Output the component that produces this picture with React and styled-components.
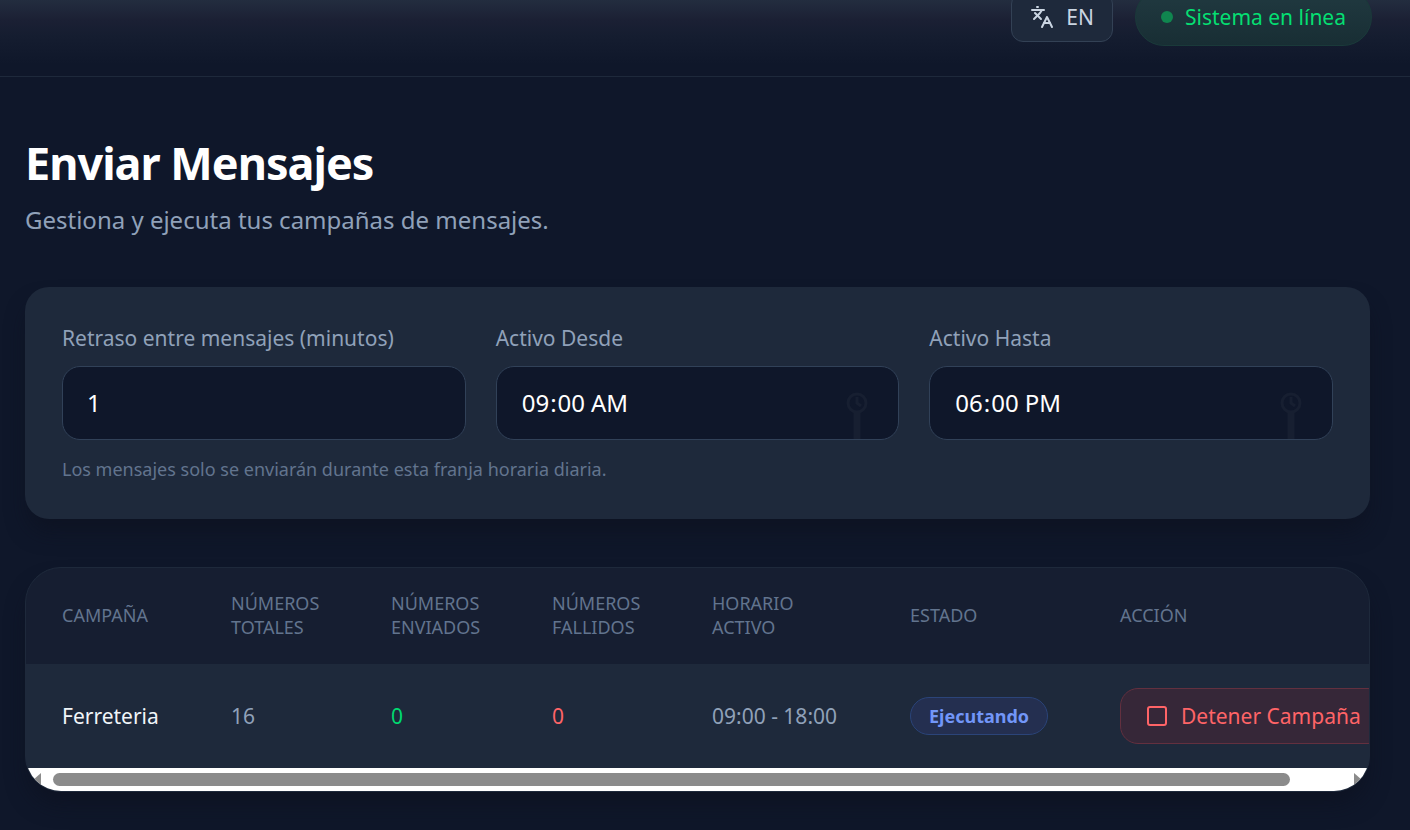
import React from "react";
import styled, { createGlobalStyle } from "styled-components";
import { Languages, Square } from "lucide-react";

const campaigns = [
  {
    name: "Ferreteria",
    total: 16,
    sent: 0,
    failed: 0,
    schedule: "09:00 - 18:00",
    status: "Ejecutando",
  },
];

function TimeField({ id, label, value }) {
  return (
    <Field>
      <Label htmlFor={id}>{label}</Label>
      <InputWrap>
        <Input id={id} type="time" defaultValue={value} />
        <ClockIcon viewBox="0 0 22 47" aria-hidden="true">
          <circle cx="11" cy="11" r="9" />
          <path d="M11 5v6l4 3" />
          <path d="M11 21v26" strokeWidth="7" />
        </ClockIcon>
      </InputWrap>
    </Field>
  );
}

function App() {
  return (
    <Page>
      <GlobalStyle />
      <Header>
        <LangButton type="button">
          <Languages size={24} />
          EN
        </LangButton>
        <OnlinePill>
          <Dot />
          Sistema en línea
        </OnlinePill>
      </Header>
      <Main>
        <Title>Enviar Mensajes</Title>
        <Subtitle>Gestiona y ejecuta tus campañas de mensajes.</Subtitle>

        <Settings>
          <Fields>
            <Field>
              <Label htmlFor="delay">Retraso entre mensajes (minutos)</Label>
              <Input id="delay" type="number" min="1" defaultValue="1" />
            </Field>
            <TimeField id="from" label="Activo Desde" value="09:00" />
            <TimeField id="to" label="Activo Hasta" value="18:00" />
          </Fields>
          <Hint>
            Los mensajes solo se enviarán durante esta franja horaria diaria.
          </Hint>
        </Settings>

        <TableCard>
          <TableScroll>
            <Table>
              <colgroup>
                <col width="169" />
                <col width="160" />
                <col width="161" />
                <col width="160" />
                <col width="198" />
                <col width="210" />
                <col />
              </colgroup>
              <thead>
                <tr>
                  <Th>Campaña</Th>
                  <Th>Números Totales</Th>
                  <Th>Números Enviados</Th>
                  <Th>Números Fallidos</Th>
                  <Th>Horario Activo</Th>
                  <Th>Estado</Th>
                  <Th>Acción</Th>
                </tr>
              </thead>
              <tbody>
                {campaigns.map((c) => (
                  <tr key={c.name}>
                    <Td $color="#f1f5f9">{c.name}</Td>
                    <Td>{c.total}</Td>
                    <Td $color="#00d970">{c.sent}</Td>
                    <Td $color="#ff6467">{c.failed}</Td>
                    <Td>{c.schedule}</Td>
                    <Td>
                      <Status>{c.status}</Status>
                    </Td>
                    <Td>
                      <StopButton type="button">
                        <Square size={24} />
                        Detener Campaña
                      </StopButton>
                    </Td>
                  </tr>
                ))}
              </tbody>
            </Table>
          </TableScroll>
          <ScrollTrack aria-hidden="true">
            <Arrow viewBox="0 0 8 14">
              <path d="M8 0v14L0 7z" />
            </Arrow>
            <ScrollRail>
              <ScrollThumb />
            </ScrollRail>
            <Arrow viewBox="0 0 8 14">
              <path d="M0 0v14l8-7z" />
            </Arrow>
          </ScrollTrack>
        </TableCard>
      </Main>
    </Page>
  );
}

const GlobalStyle = createGlobalStyle`
  * {
    box-sizing: border-box;
  }
  body {
    margin: 0;
    background: #0f172a;
    color: #fff;
    font-family: "Noto Sans", sans-serif;
  }
  button, input {
    font-family: inherit;
  }
`;

const Page = styled.div`
  min-height: 100vh;
  overflow: hidden;
`;

const Header = styled.header`
  display: flex;
  align-items: center;
  justify-content: flex-end;
  gap: 22px;
  height: 120px;
  margin-top: -43px;
  padding: 0 38px;
  border-bottom: 1px solid #1e293b;
  background: linear-gradient(#232d3f 36%, #1b2034 53%, #151d30 66%, #0f172a 90%);
`;

const LangButton = styled.button`
  display: flex;
  align-items: center;
  gap: 12px;
  height: 50px;
  padding: 0 18px;
  border: 1px solid #334155;
  border-radius: 12px;
  background: #1e293b;
  color: #cad5e2;
  font-size: 21px;
`;

const OnlinePill = styled.div`
  display: flex;
  align-items: center;
  gap: 12px;
  height: 58px;
  padding: 0 25px;
  border: 1px solid #1a3a3a;
  border-radius: 29px;
  background: linear-gradient(#213a41, #182e34);
  color: #05df72;
  font-size: 21px;
`;

const Dot = styled.span`
  width: 12px;
  height: 12px;
  border-radius: 50%;
  background: #10864f;
`;

const Main = styled.main`
  padding: 59px 40px 40px 25px;
`;

const Title = styled.h1`
  margin: 0;
  font-size: 45px;
  line-height: 54px;
  font-weight: 700;
  letter-spacing: -1px;
`;

const Subtitle = styled.p`
  margin: 12px 0 0;
  color: #90a1b9;
  font-size: 24px;
  line-height: 36px;
`;

const Settings = styled.section`
  margin-top: 49px;
  padding: 36px 37px;
  border-radius: 24px;
  background: #1e293b;
  box-shadow: 0 15px 22px -4px rgba(13, 17, 32, 0.7);
`;

const Fields = styled.div`
  display: grid;
  grid-template-columns: repeat(3, 1fr);
  gap: 30px;
`;

const Field = styled.div`
  display: flex;
  flex-direction: column;
  gap: 12px;
`;

const Label = styled.label`
  color: #90a1b9;
  font-size: 21px;
  line-height: 31px;
`;

const InputWrap = styled.div`
  position: relative;
`;

const Input = styled.input`
  width: 100%;
  height: 74px;
  padding: 0 24px 2px;
  border: 1px solid #314158;
  border-radius: 18px;
  outline: none;
  background: #0f172a;
  color: #fff;
  font-size: 24px;

  &::-webkit-calendar-picker-indicator {
    opacity: 0;
  }
`;

const ClockIcon = styled.svg`
  position: absolute;
  right: 31px;
  bottom: 1px;
  width: 22px;
  height: 47px;
  fill: none;
  stroke: #171f31;
  stroke-width: 3;
  pointer-events: none;
`;

const Hint = styled.p`
  margin: 16px 0 0;
  color: #62748e;
  font-size: 18px;
  line-height: 27px;
`;

const TableCard = styled.section`
  margin-top: 48px;
  overflow: hidden;
  border: 1px solid #1e293b;
  border-radius: 36px;
  background: #1e293b;
  box-shadow: 0 15px 22px -4px rgba(13, 17, 32, 0.7);
`;

const TableScroll = styled.div`
  overflow: hidden;
`;

const Table = styled.table`
  width: 1420px;
  border-collapse: collapse;
  table-layout: fixed;

  thead {
    background: #161e31;
  }
`;

const Th = styled.th`
  height: 96px;
  padding: 0 36px 2px;
  color: #62748e;
  font-size: 18px;
  font-weight: 400;
  line-height: 24px;
  text-align: left;
  text-transform: uppercase;
`;

const Td = styled.td`
  height: 104px;
  padding: 0 0 0 36px;
  color: ${(props) => props.$color || "#90a1b9"};
  font-size: 21px;
  line-height: 31px;
  white-space: nowrap;
`;

const Status = styled.span`
  display: inline-block;
  padding: 4px 18px;
  border: 1px solid #2b4479;
  border-radius: 19px;
  background: #242f50;
  color: #7296f8;
  font-size: 18px;
  font-weight: 700;
  line-height: 28px;
`;

const StopButton = styled.button`
  display: flex;
  align-items: center;
  gap: 12px;
  height: 56px;
  padding: 0 24px;
  border: 1px solid #63303f;
  border-radius: 18px;
  background: #362738;
  color: #ff6467;
  font-size: 21px;
`;

const ScrollTrack = styled.div`
  display: flex;
  align-items: center;
  gap: 12px;
  height: 23px;
  padding: 0 7px;
  background: #fff;
`;

const ScrollRail = styled.div`
  flex: 1;
`;

const ScrollThumb = styled.div`
  width: 96%;
  height: 13px;
  border-radius: 7px;
  background: #8b8b8b;
`;

const Arrow = styled.svg`
  width: 8px;
  height: 14px;
  fill: #8b8b8b;
`;

export default App;
